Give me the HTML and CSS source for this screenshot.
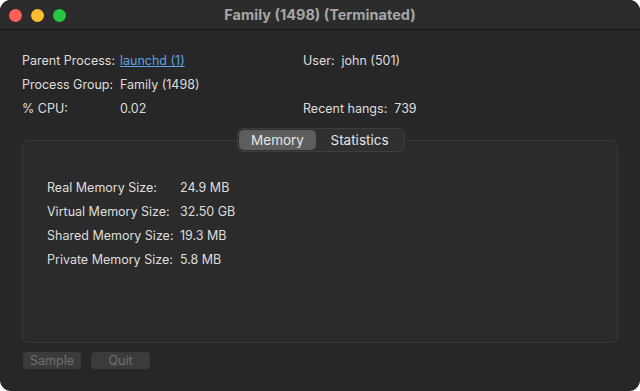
FILE: index.html
```html
<!DOCTYPE html>
<html lang="en">
<head>
    <meta charset="UTF-8">
    <title>Family (1498) (Terminated)</title>
    <link rel="stylesheet" href="styles.css">
</head>
<body>

<div class="window">
    <!-- title bar with traffic lights -->
    <div class="titlebar">
        <div class="lights">
            <span class="light red"></span>
            <span class="light yellow"></span>
            <span class="light green"></span>
        </div>
        <div class="title">Family (1498) (Terminated)</div>
    </div>

    <div class="content">
        <div class="info">
            <div class="info-col">
                <div class="row"><span class="key">Parent Process:</span><a href="#" class="link">launchd (1)</a></div>
                <div class="row"><span class="key">Process Group:</span><span>Family (1498)</span></div>
                <div class="row"><span class="key">% CPU:</span><span>0.02</span></div>
            </div>
            <div class="info-col right">
                <div class="row">User:&nbsp; john (501)</div>
                <div class="row"></div>
                <div class="row">Recent hangs:&nbsp; 739</div>
            </div>
        </div>

        <div class="tabbox">
            <div class="segmented">
                <span class="seg selected">Memory</span>
                <span class="seg">Statistics</span>
            </div>
            <div class="panel">
                <div class="mem-row"><span class="mem-key">Real Memory Size:</span><span>24.9 MB</span></div>
                <div class="mem-row"><span class="mem-key">Virtual Memory Size:</span><span>32.50 GB</span></div>
                <div class="mem-row"><span class="mem-key">Shared Memory Size:</span><span>19.3 MB</span></div>
                <div class="mem-row"><span class="mem-key">Private Memory Size:</span><span>5.8 MB</span></div>
            </div>
        </div>

        <div class="buttons">
            <button class="btn sample" disabled>Sample</button>
            <button class="btn quit" disabled>Quit</button>
        </div>
    </div>
</div>

</body>
</html>
```

FILE: styles.css
```css
html, body {
    margin: 0;
    background: #ffffff;
}
body {
    font-family: Inter, "Noto Sans", "Liberation Sans", sans-serif;
    font-size: 12.5px;
    color: #dedede;
}
.window {
    width: 640px;
    height: 391px;
    background: #272727;
    border-radius: 11px;
    overflow: hidden;
    box-sizing: border-box;
}
/* Title bar */
.titlebar {
    position: relative;
    height: 30px;
    background: #2c2c2c;
    border-bottom: 1px solid #141414;
    box-sizing: border-box;
}
.lights {
    display: flex;
    gap: 9px;
    padding: 9px 0 0 9px;
}
.light {
    width: 13px;
    height: 13px;
    border-radius: 50%;
}
.red { background: #fe5f57; }
.yellow { background: #febc2e; }
.green { background: #28c840; }
.title {
    position: absolute;
    top: 0;
    left: 0;
    right: 0;
    line-height: 30px;
    text-align: center;
    font-weight: 700;
    font-size: 14.5px;
    color: #a6a6a6;
}
/* Info area */
.content {
    padding: 19px 22px 0 22px;
}
.info {
    display: flex;
}
.info-col {
    width: 281px;
}
.row {
    height: 24px;
    line-height: 24px;
}
.key {
    display: inline-block;
    width: 98px;
}
.link {
    color: #5fa2e8;
    text-decoration: underline;
}
/* Tab box */
.tabbox {
    position: relative;
    margin-top: 7px;
    padding-top: 12px;
}
.segmented {
    position: absolute;
    top: 0;
    left: 215px;
    display: flex;
    width: 168px;
    height: 24px;
    padding: 1px;
    box-sizing: border-box;
    background: #303030;
    border: 1px solid #3e3e3e;
    border-radius: 6px;
    z-index: 1;
}
.seg {
    flex: 1;
    text-align: center;
    line-height: 20px;
    font-size: 13.5px;
    color: #e6e6e6;
    border-radius: 5px;
}
.seg.selected {
    flex: 0 0 77px;
    background: #5d5d5d;
}
.panel {
    height: 203px;
    box-sizing: border-box;
    background: #2b2b2b;
    border: 1px solid #3a3a3a;
    border-radius: 6px;
    padding: 35px 0 0 24px;
}
.mem-row {
    height: 24px;
    line-height: 24px;
}
.mem-key {
    display: inline-block;
    width: 133px;
}
/* Bottom buttons */
.buttons {
    display: flex;
    gap: 10px;
    margin-top: 9px;
    padding-left: 1px;
}
.btn {
    height: 17px;
    padding: 0;
    border: none;
    border-radius: 4px;
    background: #3b3b3b;
    color: #707070;
    font-family: inherit;
    font-size: 12.5px;
    line-height: 17px;
}
.sample { width: 58px; }
.quit { width: 59px; }
```
